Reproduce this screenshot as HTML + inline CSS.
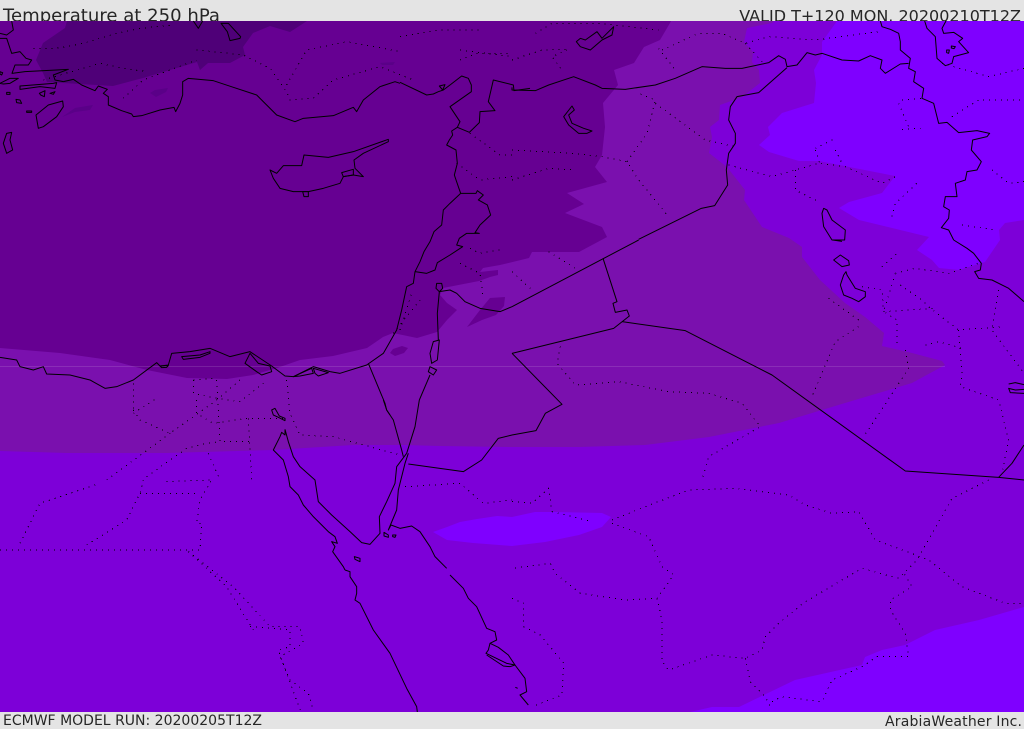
<!DOCTYPE html>
<html lang="en"><head><meta charset="utf-8"><title>Temperature at 250 hPa</title>
<style>
html,body{margin:0;padding:0;background:#e4e4e4;width:1024px;height:729px;overflow:hidden}
svg{display:block}
text{font-family:"DejaVu Sans","Liberation Sans",sans-serif;fill:#262626}
.c{fill:none;stroke:#000;stroke-width:3;stroke-linejoin:round}
.d{fill:none;stroke:#000;stroke-width:3;stroke-dasharray:3 15;shape-rendering:crispEdges}
</style></head><body>
<svg width="1024" height="729" viewBox="0 0 1024 729" xmlns="http://www.w3.org/2000/svg">
<rect width="1024" height="729" fill="#e4e4e4"/>
<text x="3" y="21.5" font-size="18" textLength="217" lengthAdjust="spacingAndGlyphs">Temperature at 250 hPa</text>
<text x="1021" y="21.5" font-size="16" text-anchor="end">VALID T+120 MON. 20200210T12Z</text>
<text x="3" y="725" font-size="14" textLength="259" lengthAdjust="spacing">ECMWF MODEL RUN: 20200205T12Z</text>
<text x="885" y="726" font-size="14" textLength="137" lengthAdjust="spacing">ArabiaWeather Inc.</text>
<svg x="0" y="0" width="1024" height="712" viewBox="0 0 1024 712">
<rect x="0" y="21" width="1024" height="691" fill="#7d00d8"/>
<!-- bright -->
<path fill="#7f00ff" d="M837,21 822,42 822,55 814,70 816,83 814,103 782,113 768,127 770,135 759,145 769,152 799,161 819,161 895,176 882,193 849,202 839,208 859,220 929,237 917,250 932,260 939,268 959,270 985,262 1000,240 999,230 1005,223 1024,220 1024,21Z"/>
<path fill="#7f00ff" d="M433,532 447,527 460,522 477,519 497,516 512,517 535,512 555,512 602,513 611,517 602,527 579,535 545,542 512,546 473,543 447,540Z"/>
<path fill="#7f00ff" d="M1024,607 979,620 935,630 905,645 882,650 865,657 862,665 795,680 739,707 712,707 690,712 1024,712Z"/>
<!-- medium -->
<path fill="#7a10ae" d="M0,21 774,21 772,23 747,28 744,42 753,52 752,62 759,70 760,83 742,97 720,105 719,120 710,127 712,137 709,153 727,167 745,190 744,200 762,227 789,238 802,247 802,257 820,280 845,303 865,317 884,333 882,346 912,353 942,361 945,365 912,383 845,403 779,423 709,437 645,445 579,447 512,447 440,446 405,445 353,445 273,450 167,453 67,453 0,451Z"/>
<!-- dark -->
<path fill="#660092" d="M0,21 671,21 670,23 660,40 644,47 634,63 614,70 618,85 603,103 605,127 602,155 595,167 607,182 567,193 584,204 565,213 602,227 607,237 579,252 532,252 529,258 500,265 483,268 480,272 498,270 498,275 490,277 479,281 443,288 440,295 447,303 457,310 447,320 437,332 417,338 393,333 383,337 367,348 333,356 300,360 277,368 253,375 227,379 187,378 147,370 110,360 60,353 0,348Z"/>
<path fill="#660092" d="M467,327 480,310 490,298 505,297 504,306 496,315 482,320Z"/>
<path fill="#660092" d="M390,353 393,349 402,346 408,348 404,353 395,356Z"/>
<!-- darkest -->
<path fill="#4f0078" d="M67,21 65,28 43,43 36,60 43,73 47,82 113,86 143,78 197,62 200,70 208,63 230,63 245,55 243,47 253,33 270,26 290,32 307,21Z"/>
<path fill="#5a0088" d="M150,93 155,90 168,88 166,92 156,97Z"/>
<path fill="#5a0088" d="M62,117 75,108 93,105 90,110 75,112Z"/>
<path fill="#5a0088" d="M380,63 395,62 393,65 382,65Z"/>
<!-- faint line -->
<path d="M0,366.5H945" stroke="#fff" stroke-opacity=".12" stroke-width="1" fill="none"/>
<!-- tile 1 -->
<g transform="scale(.33333)">
<g class="d">
<path d="M100,145 170,145 250,130 350,100 420,85 520,75"/>
<path d="M130,240 300,190 370,205 440,215"/>
<path d="M370,295 430,240 590,180"/>
<path d="M590,150 640,155 730,165 810,205 860,275 870,300 940,295 1000,240 1140,200 1240,240"/>
<path d="M860,255 920,150 1040,125 1150,145 1200,155"/>
<path d="M1200,110 1320,90 1440,90"/>
<path d="M1380,150 1536,170"/>
<path d="M1410,400 1500,465 1536,465"/>
<path d="M1370,490 1440,540 1536,530"/>
<path d="M1380,180 1430,160 1536,160"/>
</g>
<g class="c">
<path d="M35,63 40,90 20,105 0,100M0,115 20,115 35,160 60,155 78,175 95,180 85,195 45,195 36,220 75,215 205,208 160,225 165,240 190,245"/>
<path d="M190,245 220,238 245,255 285,272 295,258 322,268 310,280 325,290 325,315 365,332 395,342 400,350 425,347 480,330 522,322 527,335 540,310 548,285 548,245 565,235 640,242 700,262 770,285 800,315 830,345 885,365 910,355 1000,347 1060,322 1070,335 1090,300 1140,260 1185,245 1200,250"/>
<path d="M108,345 145,315 188,303 190,320 170,350 130,380 115,385Z"/>
<path d="M20,400 35,397 30,420 38,450 20,460 10,430Z"/>
<path d="M60,258 160,250 170,248 165,265 120,260 60,268Z"/>
<path d="M0,250 30,235 55,235 30,250 10,252Z"/>
<path d="M20,277 30,277 30,283 20,283Z"/>
<path d="M48,298 60,300 65,310 50,308Z"/>
<path d="M80,333 95,333 95,337 80,337Z"/>
<path d="M118,280 135,272 133,290 122,285Z"/>
<path d="M150,280 165,275 160,283Z"/>
<path d="M0,215 8,218 5,225 0,222Z"/>
<path d="M810,510 830,520 850,497 905,497 912,465 985,472 1060,455 1165,418 1165,425 1090,460 1062,480 1065,505 1090,530 1060,525 1030,530 1020,550 970,565 925,575 880,575 840,565 820,535Z"/>
<path d="M908,575 925,575 925,590 912,590Z"/>
<path d="M1025,518 1060,508 1060,525 1030,530Z"/>
<path d="M580,63 595,85 608,63"/>
<path d="M663,70 685,70 722,110 720,115 690,122 682,95Z"/>
</g>
</g>
<!-- Levant -->
<g transform="translate(400,70) scale(.33333)">
<g class="c">
<path d="M0,37 80,75 100,72 115,65 130,60 150,45 185,18 205,25 214,45 214,65 190,82 150,110 180,155 172,172 155,183 158,195 148,210 140,225 168,240 172,280 163,315 175,350 182,370 150,400 130,420 125,465 102,485 90,515 72,545 60,575 45,605 40,640 20,650 5,720"/>
<path d="M172,172 208,187 238,158 240,125 285,122 265,95 280,30 340,45 342,62 390,55"/>
<path d="M182,370 228,370 232,362 250,375 235,390 262,405 272,435 240,465 225,488 238,490 200,490 178,505 170,525 188,530 150,555 112,578 105,600 80,610 45,605"/>
<path d="M118,48 135,44 128,60Z"/>
</g>
</g>
<!-- tile 2 -->
<g transform="translate(512,0) scale(.33333)">
<g class="d">
<path d="M0,180 90,150 170,148 120,170 150,210"/>
<path d="M70,100 120,70 260,70 440,90"/>
<path d="M440,145 490,210"/>
<path d="M450,150 560,100 630,100 700,130 770,110 910,120 1100,95"/>
<path d="M700,130 750,185"/>
<path d="M0,540 110,505 190,510"/>
<path d="M0,450 180,460 270,470 345,485 380,540 470,650"/>
<path d="M345,485 405,400 430,300 380,280"/>
<path d="M430,310 580,420 670,440"/>
<path d="M650,495 780,530 850,510 920,490 1000,500 1110,550 1150,530"/>
<path d="M850,510 850,570 920,605"/>
<path d="M910,445 970,415"/>
<path d="M970,450 990,490"/>
<path d="M910,450 925,495"/>
<path d="M1140,650 1150,610 1220,545"/>
<path d="M1170,300 1230,295"/>
<path d="M1160,310 1190,380"/>
<path d="M1170,388 1225,385"/>
<path d="M1320,350 1400,300 1530,300"/>
<path d="M1290,190 1430,230 1536,205"/>
<path d="M1440,510 1490,550 1536,545"/>
<path d="M1350,675 1450,690"/>
</g>
<g class="c">
<path d="M0,262 0,270 70,272 110,255 185,230 250,255 270,265 340,268 430,255 490,235 570,200 640,205 690,205 770,188 800,167 820,178 825,200 855,195 885,158 910,165 930,160 990,180 1040,183 1075,167 1110,180 1105,205 1120,220 1165,192 1190,190"/>
<path d="M825,203 740,278 675,290 655,320 650,360 670,400 670,430 650,460 643,510 647,555 608,617 568,625 380,718"/>
<path d="M1105,63 1110,80 1135,88 1160,100 1165,125 1165,150 1195,175 1190,205 1210,215 1205,245 1235,265 1230,295 1265,310 1280,370 1305,367 1340,398 1395,392 1433,400 1425,410 1382,420 1378,450 1408,485 1395,510 1365,515 1360,540 1330,550 1335,590 1300,590 1295,620 1312,630 1310,655 1288,683 1310,690 1325,720"/>
<path d="M1238,63 1245,85 1270,110 1275,175 1300,197 1320,190 1325,170 1370,158 1340,125 1352,115 1325,97 1295,100 1290,85 1302,63"/>
<path d="M1304,150 1312,150 1310,160 1304,158Z M1318,138 1330,140 1326,146 1318,144Z"/>
<path d="M193,125 205,115 220,120 255,95 270,115 305,80 300,105 270,120 235,150 205,140Z"/>
<path d="M180,318 187,330 170,345 180,370 215,385 240,393 225,400 200,400 170,375 155,350Z"/>
<path d="M935,625 945,630 960,660 1000,690 998,720 960,720 935,680 930,640Z"/>
</g>
</g>
<!-- tile 3 -->
<g transform="translate(0,240) scale(.33333)">
<g class="d">
<path d="M400,430 400,520 470,475"/>
<path d="M400,510 420,540 510,580 650,480 720,420"/>
<path d="M580,420 580,460 650,475 720,485 790,430"/>
<path d="M580,420 650,415"/>
<path d="M650,420 660,605 760,605"/>
<path d="M590,480 590,520 640,550 740,535 850,535"/>
<path d="M745,535 755,720"/>
<path d="M860,420 870,520 900,585 1000,590 1200,645"/>
<path d="M320,720 510,580"/>
<path d="M440,710 560,625 620,610 660,605"/>
<path d="M625,640 660,720"/>
<path d="M1180,280 1260,180"/>
<path d="M1200,270 1235,160"/>
<path d="M1380,70 1440,100 1450,175"/>
<path d="M1410,25 1440,40 1500,30"/>
</g>
<g class="c">
<path d="M0,352 50,360 60,380 100,390 130,380 140,402 210,405 270,420 315,445 350,440 400,420 470,368 480,378 505,375 515,340 570,335 630,325 690,350 750,335 815,378 855,408 880,410 940,380 990,395 1020,400 1100,375 1150,340 1190,270 1205,210"/>
<path d="M1105,370 1155,490 1160,510 1170,525"/>
<path d="M1310,130 1325,130 1328,145 1318,155 1308,145Z"/>
<path d="M1318,155 1312,220 1315,300"/>
<path d="M1300,305 1318,300 1312,360 1295,370 1290,340Z"/>
<path d="M1290,380 1310,390 1300,405 1285,395Z"/>
<path d="M1290,405 1258,480"/>
<path d="M1318,155 1350,150 1370,160 1395,185 1440,205 1500,215 1536,200"/>
<path d="M545,350 600,345 630,335 630,340 600,352 550,358Z"/>
<path d="M735,370 750,340 775,370 810,378 815,395 785,405 770,395Z"/>
<path d="M880,410 935,385 940,400 900,408Z"/>
<path d="M940,385 985,398 955,408 945,400Z"/>
<path d="M480,378 505,377 500,382 485,383Z"/>
<path d="M1536,585 1495,595 1445,660 1390,695 1225,672"/>
</g>
</g>
<!-- Sinai -->
<g transform="translate(260,400) scale(.33333)">
<g class="c">
<path d="M35,30 45,25 58,48 75,55 75,62 55,52 40,45Z"/>
<path d="M75,88 75,105 65,97 60,110 40,150 70,180 85,230 90,260 115,285 130,315 160,350 205,395 225,410 232,430 215,425 225,440 218,455 250,500 255,510"/>
<path d="M75,88 85,125 100,170 120,200 165,240 175,305 215,345 270,395 305,428 330,433 360,400 358,350 380,305 405,250 410,200 440,160"/>
<path d="M445,160 435,190 415,270 410,330 385,390 393,375 420,385 455,378 480,395 510,440 525,470 560,505"/>
<path d="M370,0 380,30 400,60 425,150 430,170"/>
<path d="M478,0 465,80 440,160"/>
<path d="M372,397 385,405 385,412 372,408Z"/>
<path d="M398,405 408,405 405,412 398,410Z"/>
<path d="M283,470 300,475 300,485 285,478Z"/>
</g>
</g>
<!-- Red Sea -->
<g transform="translate(340,560) scale(.33333)">
<g class="c">
<path d="M15,30 30,35 30,50 50,80 50,100 45,120 60,130 100,210 150,280 200,385 230,440 232,456"/>
<path d="M330,45 370,85 385,115 410,140 440,205 465,215 470,240 450,250 445,270 438,280 500,310 525,315 555,355 560,395 540,405 565,435"/>
<path d="M450,250 475,262 505,285 525,315 510,320 490,318 440,285"/>
<path d="M526,382 533,385"/>
</g>
</g>
<!-- tile 4 -->
<g transform="translate(512,240) scale(.33333)">
<g class="d">
<path d="M0,95 60,150"/>
<path d="M110,35 190,85"/>
<path d="M145,320 135,370 190,435 320,425 470,455 590,460 690,490 745,560 590,650 570,720"/>
<path d="M1040,260 970,305 900,470"/>
<path d="M950,175 1040,240"/>
<path d="M1180,330 1190,385 1055,590"/>
<path d="M1150,100 1210,85 1310,100 1400,70"/>
<path d="M1150,100 1115,215 1155,240 1155,320"/>
<path d="M1050,140 1110,150 1115,215"/>
<path d="M1110,80 1155,40"/>
<path d="M1165,135 1230,180 1255,205 1340,270 1470,260"/>
<path d="M1115,215 1265,205"/>
<path d="M1340,270 1350,400 1345,440 1460,480 1490,600 1470,700"/>
<path d="M1240,315 1280,305 1350,325"/>
<path d="M1460,150 1440,270 1536,400"/>
</g>
<g class="c">
<path d="M380,0 0,200"/>
<path d="M0,340 305,265 352,228 345,210 310,217 303,190 315,185 273,55"/>
<path d="M330,245 520,272 780,405 1180,693 1460,712 1536,720"/>
<path d="M1460,712 1500,670 1536,615"/>
<path d="M0,340 150,493 100,520 72,572 0,585"/>
<path d="M1325,0 1365,25 1385,40 1408,70 1405,90 1388,95 1400,115 1440,120 1490,145 1536,185"/>
<path d="M962,0 990,4"/>
<path d="M985,45 1010,62 1012,75 990,80 965,60Z"/>
<path d="M1002,95 1005,105 1030,145 1060,155 1060,170 1040,185 1020,175 995,165 985,135 995,105Z"/>
<path d="M1490,432 1510,428 1536,434M1536,460 1495,458 1490,445 1510,450 1536,448"/>
</g>
</g>
<!-- tile 5 -->
<g transform="translate(0,480) scale(.33333)">
<g class="d">
<path d="M0,210 600,210 605,130 590,130 600,60 635,0"/>
<path d="M60,190 120,70 300,10"/>
<path d="M260,195 380,120 420,40 430,0"/>
<path d="M420,40 600,40"/>
<path d="M565,215 700,320 810,440 900,440 910,490 840,530 870,600 925,640 940,690"/>
<path d="M565,215 680,320 760,450"/>
<path d="M750,440 870,450 870,500 835,510 900,690"/>
<path d="M500,5 630,0"/>
<path d="M1215,20 1380,10 1450,70 1536,60"/>
</g>
</g>
<!-- tile 6 -->
<g transform="translate(512,480) scale(.33333)">
<g class="d">
<path d="M0,65 60,70 110,25 120,95 240,125"/>
<path d="M300,120 400,80 530,30 670,25 830,45 880,75 960,100 1040,95 1090,180 1185,215 1250,240 1350,320 1480,370 1536,370"/>
<path d="M300,130 410,170 450,260 485,285 435,355 340,360 205,340 130,280 115,250 0,265"/>
<path d="M435,355 450,420 450,545 470,570 600,525 700,535 750,510 760,470 800,430 880,365 1050,265 1160,295 1215,240 1320,55 1430,0"/>
<path d="M700,535 715,605 760,650 780,690"/>
<path d="M780,665 810,650 930,665 960,600 1050,560 1095,530 1190,530 1180,460 1135,390 1135,360 1200,320 1170,270"/>
<path d="M0,355 35,370 35,440 85,465 155,550 150,645 60,680"/>
</g>
</g>
</svg>
</svg>
</body></html>
